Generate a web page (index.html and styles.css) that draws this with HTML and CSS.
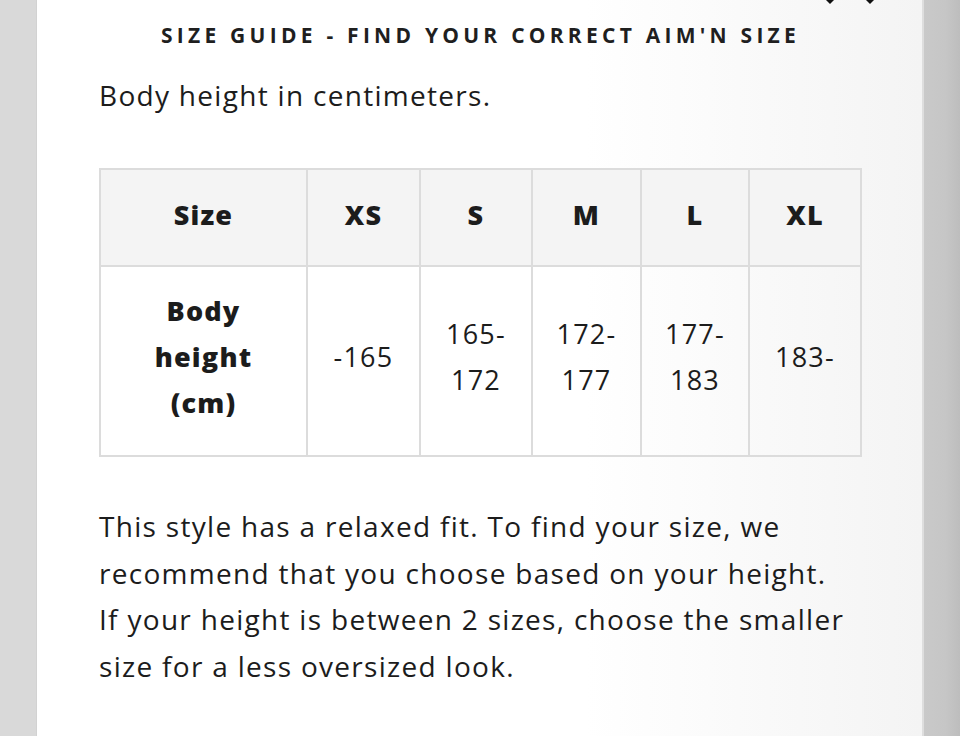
FILE: index.html
```html
<!DOCTYPE html>
<html lang="en">
<head>
<meta charset="utf-8">
<title>Size guide</title>
<link rel="stylesheet" href="styles.css">
</head>
<body>
<div class="page">
  <div class="side-left"></div>
  <main class="panel">
    <div class="top-icons">
      <span class="tri"></span>
      <span class="tri"></span>
    </div>
    <h1 class="title">SIZE GUIDE - FIND YOUR CORRECT AIM'N SIZE</h1>
    <p class="lead">Body height in centimeters.</p>
    <table class="sizes">
      <colgroup>
        <col class="c0"><col class="c1"><col class="c2"><col class="c3"><col class="c4"><col class="c5">
      </colgroup>
      <thead>
        <tr>
          <th>Size</th><th>XS</th><th>S</th><th>M</th><th>L</th><th>XL</th>
        </tr>
      </thead>
      <tbody>
        <tr>
          <th>Body<br>height<br>(cm)</th>
          <td>-165</td>
          <td>165-<br>172</td>
          <td>172-<br>177</td>
          <td>177-<br>183</td>
          <td>183-</td>
        </tr>
      </tbody>
    </table>
    <p class="note">This style has a relaxed fit. To find your size, we<br>recommend that you choose based on your height.<br>If your height is between 2 sizes, choose the smaller<br>size for a less oversized look.</p>
  </main>
  <div class="side-right"></div>
</div>
</body>
</html>
```
FILE: styles.css
```css
* { box-sizing: border-box; }
html, body { margin: 0; padding: 0; }
body {
  width: 960px;
  height: 736px;
  overflow: hidden;
  font-family: "Open Sans", "Liberation Sans", sans-serif;
  color: #1c1c1c;
  background: #d9d9d9;
}
.page {
  display: flex;
  height: 736px;
}
.side-left {
  width: 37px;
  background: #d9d9d9;
  border-right: 1px solid #d2d2d2;
}
.side-right {
  width: 38px;
  background: linear-gradient(90deg, #c9c9c9 0%, #c6c6c6 60%, #bdbdbd 100%);
  border-left: 2px solid #dedede;
}
.panel {
  position: relative;
  width: 885px;
  background: linear-gradient(90deg, #ffffff 0%, #ffffff 62%, #f4f4f4 100%);
  padding: 20px 0 0 62px;
}
.top-icons {
  position: absolute;
  top: 0;
  left: 789px;
  display: flex;
  gap: 32px;
}
.tri {
  width: 0;
  height: 0;
  border-left: 4px solid transparent;
  border-right: 4px solid transparent;
  border-top: 4px solid #111;
}
.title {
  margin: 0 0 0 -62px;
  width: 885px;
  padding-left: 2px;
  text-align: center;
  font-family: "Open Sans", "Liberation Sans", sans-serif;
  font-weight: 700;
  font-size: 21px;
  letter-spacing: 4.25px;
  line-height: 30px;
  color: #1f1f1f;
}
.lead {
  margin: 25px 0 0 0;
  font-size: 28px;
  letter-spacing: 1.3px;
  line-height: 40px;
  font-weight: 400;
}
.sizes {
  margin-top: 53px;
  border-collapse: collapse;
  width: 761px;
  table-layout: fixed;
  font-size: 27px;
  letter-spacing: 1.2px;
}
.c0 { width: 207px; }
.c1 { width: 113px; }
.c2 { width: 112px; }
.c3 { width: 109px; }
.c4 { width: 108px; }
.c5 { width: 112px; }
.sizes th, .sizes td {
  border: 2px solid #dcdcdc;
  text-align: center;
  vertical-align: middle;
  padding: 0;
  line-height: 46px;
}
.sizes thead th {
  height: 97px;
  background: #f4f4f4;
  font-weight: 800;
  padding-bottom: 6px;
}
.sizes tbody th, .sizes tbody td {
  height: 190px;
  background: transparent;
  padding-bottom: 8px;
}
.sizes tbody th { font-weight: 800; }
.sizes tbody td { font-weight: 400; }
.note {
  margin: 46px 0 0 0;
  width: 800px;
  font-size: 28px;
  letter-spacing: 1.3px;
  line-height: 46.5px;
  white-space: nowrap;
}
```
